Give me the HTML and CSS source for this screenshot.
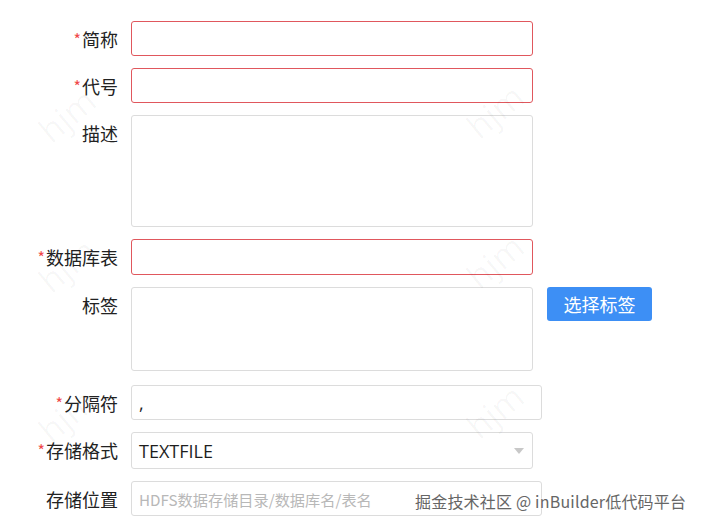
FILE: index.html
```html
<!DOCTYPE html>
<html lang="zh">
<head>
<meta charset="utf-8">
<title>表单</title>
<link rel="stylesheet" href="styles.css">
</head>
<body>
<div class="page">
  <form class="form">
    <div class="row">
      <label class="label"><span class="req">*</span>简称</label>
      <div class="field"><div class="input error h35"></div></div>
    </div>
    <div class="row">
      <label class="label"><span class="req">*</span>代号</label>
      <div class="field"><div class="input error h35"></div></div>
    </div>
    <div class="row">
      <label class="label">描述</label>
      <div class="field"><div class="input h112"></div></div>
    </div>
    <div class="row">
      <label class="label"><span class="req">*</span>数据库表</label>
      <div class="field"><div class="input error h36"></div></div>
    </div>
    <div class="row">
      <label class="label">标签</label>
      <div class="field"><div class="input h84"></div></div>
      <button type="button" class="btn">选择标签</button>
    </div>
    <div class="row spaced">
      <label class="label"><span class="req">*</span>分隔符</label>
      <div class="field"><div class="input wide h35 value">,</div></div>
    </div>
    <div class="row">
      <label class="label"><span class="req">*</span>存储格式</label>
      <div class="field"><div class="input select h37 value">TEXTFILE<span class="arrow"></span></div></div>
    </div>
    <div class="row">
      <label class="label">存储位置</label>
      <div class="field"><div class="input wide h35 placeholder">HDFS数据存储目录/数据库名/表名</div></div>
    </div>
  </form>
  <div class="wm w1">hjm</div>
  <div class="wm w2">hjm</div>
  <div class="wm w3">hjm</div>
  <div class="wm w4">hjm</div>
  <div class="wm w5">hjm</div>
  <div class="wm w6">hjm</div>
  <div class="credit">掘金技术社区 @ inBuilder低代码平台</div>
</div>
</body>
</html>
```
FILE: styles.css
```css
html, body {
  margin: 0;
  padding: 0;
  background: #ffffff;
}
body {
  font-family: "Noto Sans CJK SC", "Noto Sans", sans-serif;
  color: #222222;
}
.page {
  position: relative;
  width: 705px;
  height: 527px;
  overflow: hidden;
}
.form {
  display: flex;
  flex-direction: column;
  gap: 12px;
  padding-top: 21px;
}
.row {
  display: flex;
  align-items: flex-start;
}
.row.spaced {
  margin-top: 2px;
}
.label {
  width: 118px;
  flex: none;
  text-align: right;
  font-size: 18px;
  line-height: 36px;
  height: 35px;
  color: #222222;
  margin-right: 13px;
  white-space: nowrap;
}
.req {
  color: #f04848;
  font-size: 16px;
  position: relative;
  top: -1px;
  margin-right: 1px;
}
.field {
  flex: none;
}
.input {
  box-sizing: border-box;
  width: 402px;
  border: 1px solid #dcdcdc;
  border-radius: 3px;
  background: #ffffff;
  position: relative;
}
.input.wide { width: 411px; }
.input.error { border-color: #e0575d; }
.h35 { height: 35px; }
.h36 { height: 36px; }
.h37 { height: 37px; }
.h84 { height: 84px; }
.h112 { height: 112px; }
.value, .placeholder {
  padding-left: 7px;
  display: flex;
  align-items: center;
  white-space: nowrap;
}
.value {
  font-family: "Open Sans", "Noto Sans", sans-serif;
  font-size: 18px;
  color: #1e1e1e;
}
.placeholder {
  font-size: 15.2px;
  color: #b8b8b8;
}
.arrow {
  position: absolute;
  right: 8px;
  top: 15px;
  width: 0;
  height: 0;
  border-left: 5px solid transparent;
  border-right: 5px solid transparent;
  border-top: 6px solid #c8c8c8;
}
.btn {
  margin-left: 14px;
  width: 105px;
  height: 34px;
  border: none;
  border-radius: 3px;
  background: #3d8ff5;
  color: #ffffff;
  font-family: "Noto Sans CJK SC", sans-serif;
  font-size: 18px;
  padding: 0;
  line-height: 34px;
}
.wm {
  position: absolute;
  font-family: "Noto Sans", sans-serif;
  font-size: 34px;
  color: rgba(0, 0, 0, 0.03);
  transform: rotate(-40deg);
  pointer-events: none;
}
.w1 { left: 36px; top: 92px; }
.w2 { left: 464px; top: 88px; }
.w3 { left: 36px; top: 242px; }
.w4 { left: 464px; top: 238px; }
.w5 { left: 36px; top: 392px; }
.w6 { left: 464px; top: 388px; }
.credit {
  position: absolute;
  left: 415px;
  top: 489px;
  font-size: 16px;
  color: #666666;
  white-space: nowrap;
  text-shadow: 0 0 2px #ffffff, 0 0 2px #ffffff;
  letter-spacing: 0.2px;
}
```
